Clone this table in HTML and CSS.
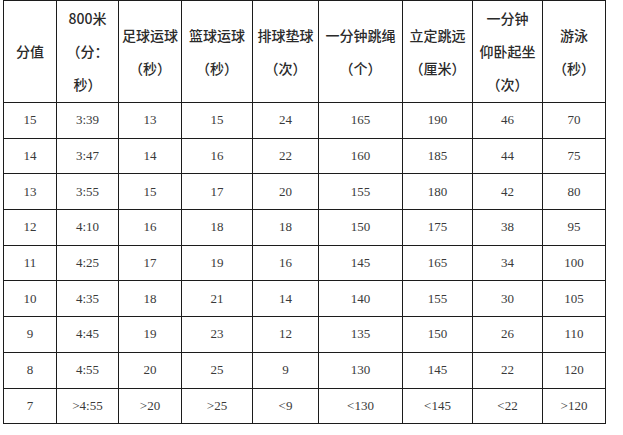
FILE: index.html
```html
<!DOCTYPE html>
<html lang="zh">
<head>
<meta charset="utf-8">
<title>体育评分表</title>
<link rel="stylesheet" href="styles.css">
</head>
<body>
<table class="score">
  <colgroup>
    <col class="c1"><col class="c2"><col class="c3"><col class="c4"><col class="c5">
    <col class="c6"><col class="c7"><col class="c8"><col class="c9">
  </colgroup>
  <thead>
    <tr class="head">
      <th>分值</th>
      <th>800米<br>（分：<br>秒）</th>
      <th>足球运球<br>（秒）</th>
      <th>篮球运球<br>（秒）</th>
      <th>排球垫球<br>（次）</th>
      <th>一分钟跳绳<br>（个）</th>
      <th>立定跳远<br>（厘米）</th>
      <th>一分钟<br>仰卧起坐<br>（次）</th>
      <th>游泳<br>（秒）</th>
    </tr>
  </thead>
  <tbody>
    <tr><td>15</td><td>3:39</td><td>13</td><td>15</td><td>24</td><td>165</td><td>190</td><td>46</td><td>70</td></tr>
    <tr><td>14</td><td>3:47</td><td>14</td><td>16</td><td>22</td><td>160</td><td>185</td><td>44</td><td>75</td></tr>
    <tr><td>13</td><td>3:55</td><td>15</td><td>17</td><td>20</td><td>155</td><td>180</td><td>42</td><td>80</td></tr>
    <tr><td>12</td><td>4:10</td><td>16</td><td>18</td><td>18</td><td>150</td><td>175</td><td>38</td><td>95</td></tr>
    <tr><td>11</td><td>4:25</td><td>17</td><td>19</td><td>16</td><td>145</td><td>165</td><td>34</td><td>100</td></tr>
    <tr><td>10</td><td>4:35</td><td>18</td><td>21</td><td>14</td><td>140</td><td>155</td><td>30</td><td>105</td></tr>
    <tr><td>9</td><td>4:45</td><td>19</td><td>23</td><td>12</td><td>135</td><td>150</td><td>26</td><td>110</td></tr>
    <tr><td>8</td><td>4:55</td><td>20</td><td>25</td><td>9</td><td>130</td><td>145</td><td>22</td><td>120</td></tr>
    <tr><td>7</td><td>&gt;4:55</td><td>&gt;20</td><td>&gt;25</td><td>&lt;9</td><td>&lt;130</td><td>&lt;145</td><td>&lt;22</td><td>&gt;120</td></tr>
  </tbody>
</table>
</body>
</html>
```
FILE: styles.css
```css
html, body {
  margin: 0;
  padding: 0;
  background: #ffffff;
}

.score {
  margin: 0 0 0 3px;
  border-collapse: collapse;
  table-layout: fixed;
  width: 602px;
  color: #333333;
}

.c1 { width: 53px; }
.c2 { width: 62px; }
.c3 { width: 63px; }
.c4 { width: 71px; }
.c5 { width: 66px; }
.c6 { width: 84px; }
.c7 { width: 70px; }
.c8 { width: 70px; }
.c9 { width: 63px; }

.score th,
.score td {
  border: 1px solid #1c1c1c;
  padding: 0;
  text-align: center;
  vertical-align: middle;
  overflow: hidden;
  white-space: nowrap;
}

.head {
  height: 102px;
}

.score th {
  font-family: "Noto Sans CJK SC", "Noto Sans", sans-serif;
  font-size: 14px;
  font-weight: 500;
  line-height: 33px;
  color: #2a2a2a;
}

.score tbody tr {
  height: 35.7px;
}

.score td {
  font-family: "Liberation Serif", "Noto Sans CJK SC", serif;
  font-size: 13px;
  line-height: 16px;
  color: #3a3a3a;
}
```
